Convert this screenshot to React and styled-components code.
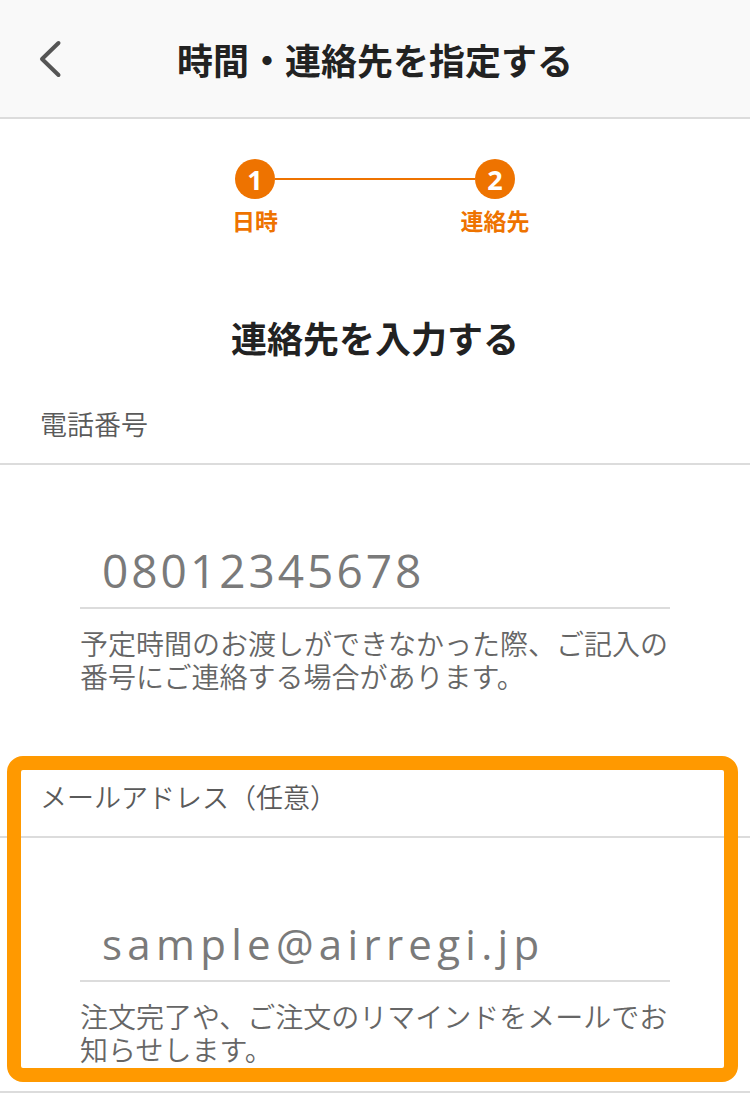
import React from "react";
import styled, { createGlobalStyle } from "styled-components";

const GlobalStyle = createGlobalStyle`
  html, body { margin: 0; padding: 0; background: #ffffff; }
  body {
    font-family: "Noto Sans CJK JP", "Noto Sans", sans-serif;
    -webkit-font-smoothing: antialiased;
  }
  * { box-sizing: border-box; }
`;

const Page = styled.div`
  width: 750px;
  min-height: 1094px;
  background: #ffffff;
  overflow: hidden;
`;

const Header = styled.header`
  height: 119px;
  background: #f9f9f9;
  border-bottom: 2px solid #dcdcdc;
  display: grid;
  grid-template-columns: 1fr auto 1fr;
  align-items: center;
`;

const BackButton = styled.button`
  justify-self: start;
  margin-left: 36px;
  padding: 0;
  border: none;
  background: transparent;
  width: 28px;
  height: 44px;
  display: flex;
  align-items: center;
  justify-content: center;
  cursor: pointer;
`;

const HeaderTitle = styled.h1`
  margin: 0;
  font-family: "Noto Sans CJK JP", sans-serif;
  font-size: 36px;
  font-weight: 700;
  line-height: 50px;
  color: #222222;
  letter-spacing: 0;
`;

const Stepper = styled.div`
  width: 280px;
  margin: 40px auto 0;
  display: flex;
  align-items: flex-start;
`;

const Step = styled.div`
  width: 40px;
  display: flex;
  flex-direction: column;
  align-items: center;
`;

const StepCircle = styled.div`
  width: 40px;
  height: 40px;
  border-radius: 50%;
  background: #ee7300;
  color: #ffffff;
  display: flex;
  align-items: center;
  justify-content: center;
  font-family: "Open Sans", sans-serif;
  font-weight: 700;
  font-size: 27px;
  line-height: 1;
`;

const StepLabel = styled.span`
  margin-top: 6px;
  white-space: nowrap;
  font-family: "Noto Sans CJK JP", sans-serif;
  font-weight: 700;
  font-size: 23px;
  line-height: 30px;
  color: #ee7300;
`;

const Connector = styled.div`
  flex: 1;
  height: 2px;
  margin-top: 19px;
  background: #ee7300;
`;

const Heading = styled.h2`
  margin: 77px 0 0;
  text-align: center;
  font-family: "Noto Sans CJK JP", sans-serif;
  font-size: 36px;
  font-weight: 700;
  line-height: 50px;
  color: #222222;
`;

const Section = styled.section`
  position: relative;
  margin-top: ${(p) => p.$gap || 0}px;
  padding-bottom: ${(p) => p.$pb}px;
  border-bottom: ${(p) => (p.$bottomLine ? "2px solid #dcdcdc" : "none")};
`;

const FieldLabel = styled.div`
  height: 82px;
  padding-left: 40px;
  border-bottom: 2px solid #dcdcdc;
  display: flex;
  align-items: center;
  font-family: "Noto Sans CJK JP", sans-serif;
  font-size: 27px;
  font-weight: 350;
  color: #5a5a5a;
`;

const FieldBody = styled.div`
  margin: 0 80px;
  padding-top: 68px;
`;

const TextInput = styled.input`
  display: block;
  width: 100%;
  height: 76px;
  padding: 0 0 0 ${(p) => p.$indent}px;
  margin: 0;
  border: none;
  border-bottom: 2px solid #dcdcdc;
  outline: none;
  background: transparent;
  font-family: "Open Sans", sans-serif;
  font-size: ${(p) => p.$size}px;
  letter-spacing: ${(p) => p.$tracking}px;
  color: #7a7a7a;
  &::placeholder {
    color: #7a7a7a;
    opacity: 1;
  }
`;

const HelpText = styled.p`
  margin: 18px 0 0;
  font-family: "Noto Sans CJK JP", sans-serif;
  font-size: 28px;
  font-weight: 350;
  line-height: 33px;
  color: #666666;
`;

const Highlight = styled.div`
  position: absolute;
  left: 7px;
  top: 0;
  width: 731px;
  height: 326px;
  border: 14px solid #ff9900;
  border-radius: 16px;
  pointer-events: none;
`;

const Chevron = () => (
  <svg width="28" height="44" viewBox="0 0 28 44" fill="none">
    <path
      d="M22.5 6 L6 22 L22.5 38"
      stroke="#555555"
      strokeWidth="4"
      strokeLinecap="round"
      strokeLinejoin="round"
    />
  </svg>
);

export default function App() {
  return (
    <>
      <GlobalStyle />
      <Page>
        <Header>
          <BackButton aria-label="戻る">
            <Chevron />
          </BackButton>
          <HeaderTitle>時間・連絡先を指定する</HeaderTitle>
          <span />
        </Header>

        <Stepper>
          <Step>
            <StepCircle>1</StepCircle>
            <StepLabel>日時</StepLabel>
          </Step>
          <Connector />
          <Step>
            <StepCircle>2</StepCircle>
            <StepLabel>連絡先</StepLabel>
          </Step>
        </Stepper>

        <Heading>連絡先を入力する</Heading>

        <Section $gap={21} $pb={63}>
          <FieldLabel>電話番号</FieldLabel>
          <FieldBody>
            <TextInput
              type="tel"
              placeholder="08012345678"
              $size={46}
              $tracking={3}
              $indent={22}
            />
            <HelpText>
              予定時間のお渡しができなかった際、ご記入の番号にご連絡する場合があります。
            </HelpText>
          </FieldBody>
        </Section>

        <Section $pb={25} $bottomLine>
          <FieldLabel>メールアドレス（任意）</FieldLabel>
          <FieldBody>
            <TextInput
              type="email"
              placeholder="sample@airregi.jp"
              $size={42}
              $tracking={5.3}
              $indent={22}
            />
            <HelpText>
              注文完了や、ご注文のリマインドをメールでお知らせします。
            </HelpText>
          </FieldBody>
          <Highlight />
        </Section>
      </Page>
    </>
  );
}
